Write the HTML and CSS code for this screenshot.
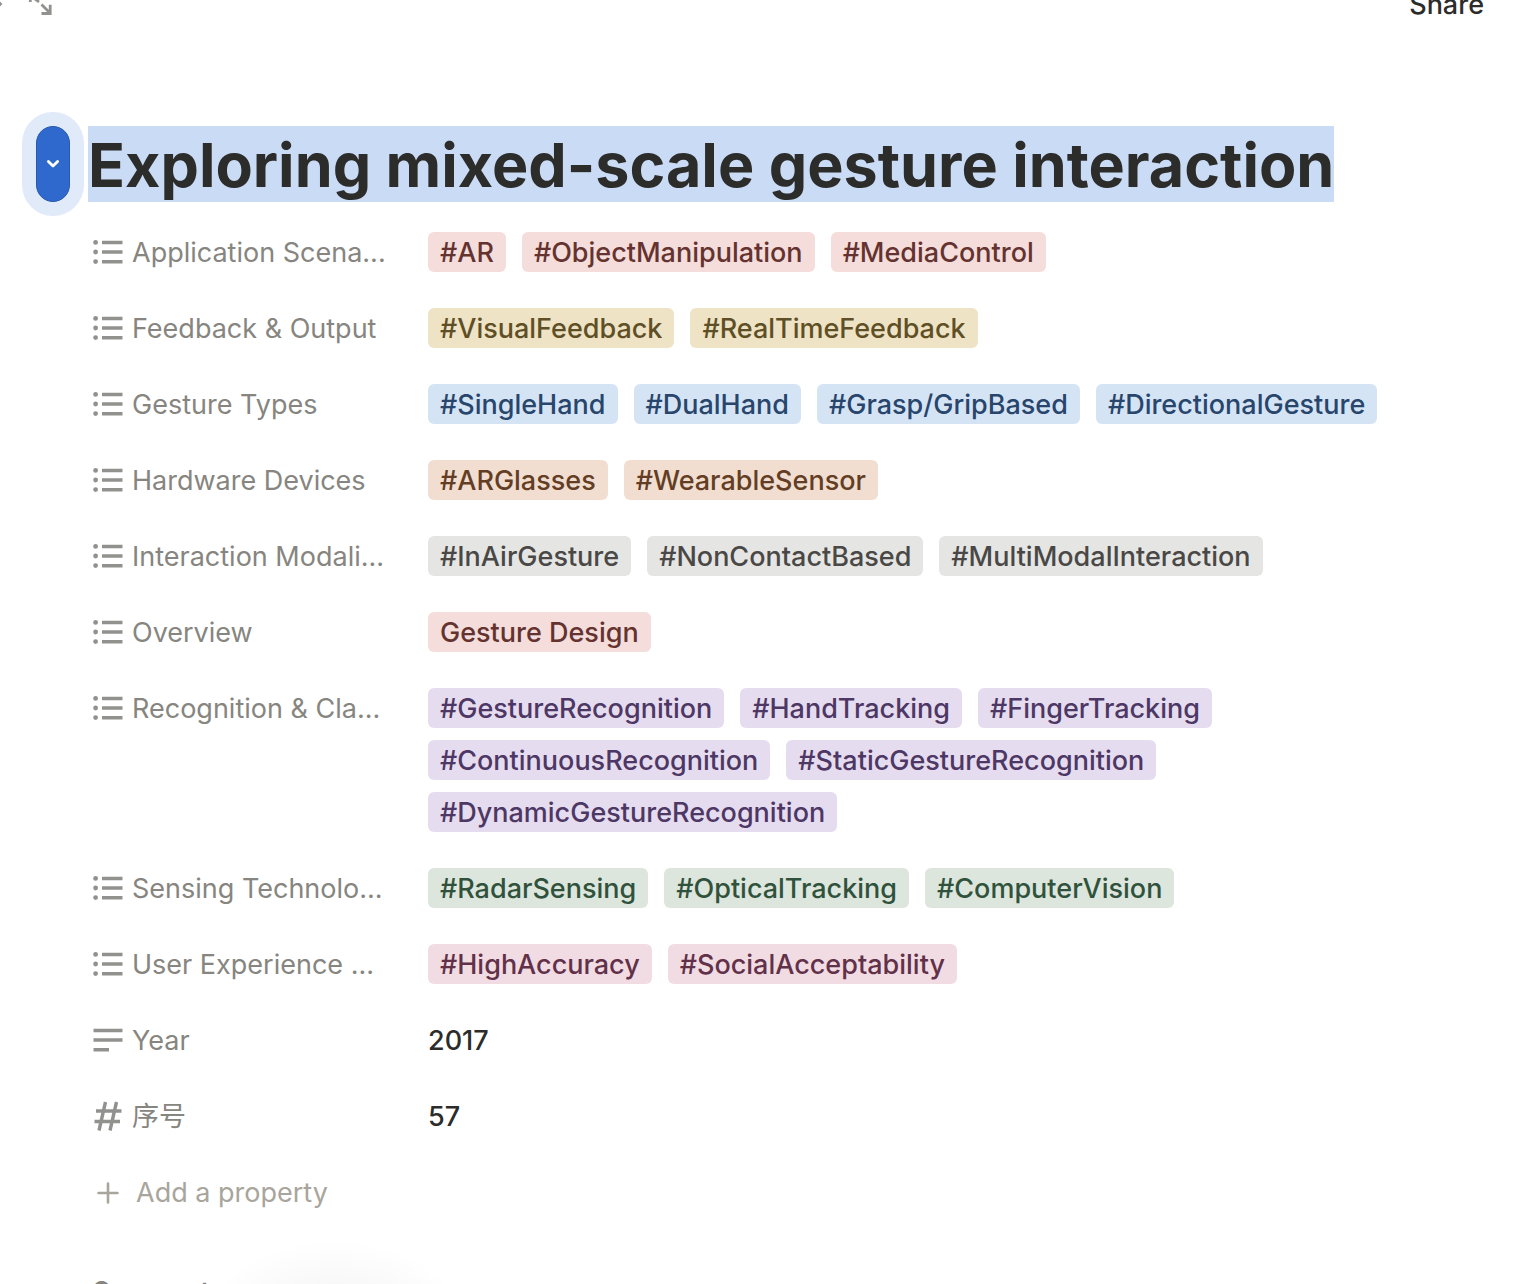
FILE: index.html
```html
<!DOCTYPE html>
<html lang="en">
<head>
<meta charset="utf-8">
<title>Exploring mixed-scale gesture interaction</title>
<link rel="stylesheet" href="styles.css">
</head>
<body>
<svg class="sprite" aria-hidden="true">
  <symbol id="list" viewBox="0 0 30 26">
    <circle cx="2.6" cy="3.4" r="2.4"/><circle cx="2.6" cy="13" r="2.4"/><circle cx="2.6" cy="22.600" r="2.4"/>
    <path d="M9 1.700h20.500v3.500H9zM9 11.300h20.500v3.500H9zM9 20.900h20.500v3.500H9z"/>
  </symbol>
  <symbol id="text" viewBox="0 0 30 26">
    <path d="M.5 1.700h29v3.500H.5zM.5 11.300h29v3.500H.5zM.5 20.900h15.500v3.500H.5z"/>
  </symbol>
</svg>
<header class="topbar">
  <button class="icon-button" aria-label="Open as full page">
    <svg width="54" height="32" viewBox="0 0 54 32" fill="none" stroke="#91918e" stroke-width="2.800"><path d="M-6 14L.5 21l-6 6M30.300 19v-7h7M31 13l8 6M41.500 21.500l8.500 8.500M41.500 30.500h8.700v-8.700"/></svg>
  </button>
  <button class="share">Share</button>
</header>
<main class="page">
  <div class="heading">
    <button class="toggle" aria-label="Selection menu">
      <svg width="14" height="10" viewBox="0 0 14 10" fill="none" stroke="#fff" stroke-width="2.800" stroke-linecap="round" stroke-linejoin="round"><path d="M2.400 2.500L7 7l4.600-4.500"/></svg>
    </button>
    <h1><mark>Exploring mixed-scale gesture interaction</mark></h1>
  </div>
  <dl class="properties">
    <div class="row"><dt><svg class="icon"><use href="#list"/></svg>Application Scena...</dt>
      <dd class="red"><span class="tag">#AR</span><span class="tag">#ObjectManipulation</span><span class="tag">#MediaControl</span></dd></div>
    <div class="row"><dt><svg class="icon"><use href="#list"/></svg>Feedback &amp; Output</dt>
      <dd class="yellow"><span class="tag">#VisualFeedback</span><span class="tag">#RealTimeFeedback</span></dd></div>
    <div class="row"><dt><svg class="icon"><use href="#list"/></svg>Gesture Types</dt>
      <dd class="blue"><span class="tag">#SingleHand</span><span class="tag">#DualHand</span><span class="tag">#Grasp/GripBased</span><span class="tag">#DirectionalGesture</span></dd></div>
    <div class="row"><dt><svg class="icon"><use href="#list"/></svg>Hardware Devices</dt>
      <dd class="orange"><span class="tag">#ARGlasses</span><span class="tag">#WearableSensor</span></dd></div>
    <div class="row"><dt><svg class="icon"><use href="#list"/></svg>Interaction Modali...</dt>
      <dd class="gray"><span class="tag">#InAirGesture</span><span class="tag">#NonContactBased</span><span class="tag">#MultiModalInteraction</span></dd></div>
    <div class="row"><dt><svg class="icon"><use href="#list"/></svg>Overview</dt>
      <dd class="red"><span class="tag">Gesture Design</span></dd></div>
    <div class="row"><dt><svg class="icon"><use href="#list"/></svg>Recognition &amp; Cla...</dt>
      <dd class="purple"><span class="tag">#GestureRecognition</span><span class="tag">#HandTracking</span><span class="tag">#FingerTracking</span><span class="tag">#ContinuousRecognition</span><span class="tag">#StaticGestureRecognition</span><span class="tag">#DynamicGestureRecognition</span></dd></div>
    <div class="row"><dt><svg class="icon"><use href="#list"/></svg>Sensing Technolo...</dt>
      <dd class="green"><span class="tag">#RadarSensing</span><span class="tag">#OpticalTracking</span><span class="tag">#ComputerVision</span></dd></div>
    <div class="row"><dt><svg class="icon"><use href="#list"/></svg>User Experience ...</dt>
      <dd class="pink"><span class="tag">#HighAccuracy</span><span class="tag">#SocialAcceptability</span></dd></div>
    <div class="row"><dt><svg class="icon"><use href="#text"/></svg>Year</dt><dd>2017</dd></div>
    <div class="row"><dt><svg class="icon number" viewBox="0 0 30 30" fill="none" stroke="#91918e" stroke-width="3.400"><path d="M3 10h25.500M1.500 20.500H27M12.500 1L6 29.500M23.500 1L17 29.500"/></svg><span lang="zh">序号</span></dt><dd>57</dd></div>
  </dl>
  <button class="add"><svg width="22" height="22" viewBox="0 0 22 22" fill="none" stroke="#a8a59c" stroke-width="2.600" stroke-linecap="round"><path d="M11 1.500v19M1.500 11h19"/></svg>Add a property</button>
  <h2 class="comments">Comments</h2>
</main>
<div class="glow" aria-hidden="true"></div>
</body>
</html>
```
FILE: styles.css
```css
* { box-sizing: border-box; }

body {
  position: relative;
  height: 100vh;
  margin: 0;
  overflow: hidden;
  background: #fff;
  color: #2c2c2b;
  font: 400 27px/42px Inter, "Noto Sans CJK SC", sans-serif;
}

button {
  padding: 0;
  border: 0;
  background: none;
  color: inherit;
  font: inherit;
  cursor: pointer;
}

.sprite { position: absolute; width: 0; height: 0; }

.topbar {
  display: flex;
  justify-content: space-between;
  align-items: flex-end;
  height: 26px;
  padding-right: 36px;
  overflow: hidden;
}

.icon-button { display: flex; padding-bottom: 11px; }

.share { font-weight: 500; white-space: nowrap; }

.page { padding: 100px 88px 0 36px; }

.heading { display: flex; gap: 18px; }

.toggle {
  display: flex;
  flex: none;
  align-items: center;
  justify-content: center;
  width: 34px;
  height: 76px;
  border: 1px solid #2859ae;
  border-radius: 17px;
  background: #3069cd;
  box-shadow: 0 0 0 14px #e1eaf9;
}

h1 {
  margin: 0;
  font-size: 61px;
  font-weight: 700;
  line-height: 78px;
}

mark {
  display: block;
  height: 76px;
  background: #cadbf5;
  color: #2c2c2b;
  white-space: nowrap;
}

.properties { margin: 16px 0 0; padding-left: 56px; }

.row {
  display: grid;
  grid-template-columns: 336px 1fr;
  padding: 14px 0 12px;
  margin-bottom: 8px;
}

dt {
  display: flex;
  align-items: center;
  gap: 9px;
  height: 42px;
  color: #868580;
  white-space: nowrap;
}

.icon { width: 30px; height: 26px; margin: 0 0 2px 1px; fill: #91918e; }

.number { height: 30px; fill: none; }

dd {
  display: flex;
  flex-wrap: wrap;
  gap: 10px 16px;
  margin: 0;
  font-weight: 500;
}

.tag {
  height: 40px;
  margin-bottom: 2px;
  padding: 0 12px;
  border-radius: 6px;
  white-space: nowrap;
}

.red .tag { background: #f4dddb; color: #64332f; }
.yellow .tag { background: #eee3c4; color: #5f4f26; }
.blue .tag { background: #d5e4f5; color: #28456c; }
.orange .tag { background: #f1ded1; color: #633e24; }
.gray .tag { background: #e5e5e3; color: #494846; }
.purple .tag { background: #e6dcef; color: #4d3764; }
.green .tag { background: #dce6dd; color: #30523c; }
.pink .tag { background: #f2dce3; color: #613149; }

.add {
  display: flex;
  align-items: center;
  gap: 17px;
  margin: 22px 0 0 61px;
  color: #a8a59c;
}

.comments {
  margin: 56px 0 0 56px;
  color: #868580;
  font-size: 25px;
  font-weight: 600;
}

.glow {
  position: absolute;
  bottom: -165px;
  left: 195px;
  width: 280px;
  height: 210px;
  border-radius: 50%;
  background: radial-gradient(closest-side, #00000010, #00000004 75%, transparent);
}
```
